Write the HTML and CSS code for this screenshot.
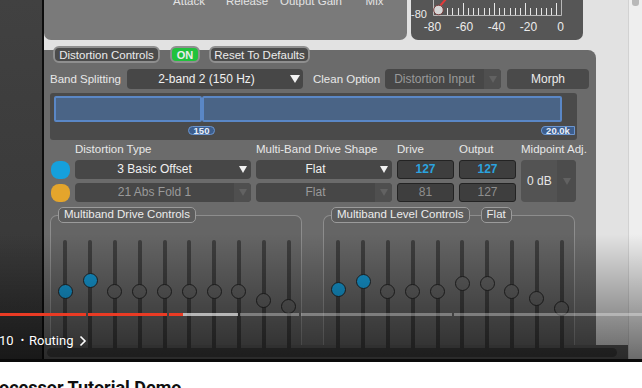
FILE: index.html
```html
<!DOCTYPE html>
<html>
<head>
<meta charset="utf-8">
<link rel="stylesheet" href="styles.css">
</head>
<body>
<div class="video">
  <div class="dock"></div>
  <div class="app">
    <div class="main">
      <div class="top-row">
        <div class="comp-panel">
          <span>Attack</span><span>Release</span><span>Output Gain</span><span>Mix</span>
        </div>
        <div class="meter-panel">
          <div class="meter-top">
            <span class="meter-min">-80</span>
            <svg class="meter-scale" width="130" height="16" viewBox="0 0 130 16">
              <path d="M0.5 0V15.5H128.5V0" fill="none" stroke="#b9b9b9" stroke-width="1"/>
              <path d="M14.5 15V8M19.5 15V8M25.5 15V8M30.5 15V3M35.5 15V8M40.5 15V8M45.5 15V8M51.5 15V8M56.5 15V8M61.5 15V3M66.5 15V8M71.5 15V8M77.5 15V8M82.5 15V8M87.5 15V8M92.5 15V3M97.5 15V8M103.5 15V8M108.5 15V8M113.5 15V8M118.5 15V8M123.5 15V3" stroke="#e6e6e6" stroke-width="1"/>
              <path d="M7 6L13 -1" stroke="#e03a3a" stroke-width="2"/>
              <circle cx="5.5" cy="10" r="4.8" fill="#d6d6d6" stroke="#7a3b3b" stroke-width="1"/>
            </svg>
          </div>
          <div class="meter-labels"><span>-80</span><span>-60</span><span>-40</span><span>-20</span><span>0</span></div>
        </div>
      </div>

      <div class="dist-panel">
        <div class="tabs">
          <span class="tab t-dist">Distortion Controls</span>
          <span class="tab t-on">ON</span>
          <span class="tab t-reset">Reset To Defaults</span>
        </div>

        <div class="band-row">
          <span class="lbl lbl-band">Band Splitting</span>
          <div class="dd w-band"><span class="dd-text">2-band 2 (150 Hz)</span><span class="dd-arrow big"></span></div>
          <span class="lbl lbl-clean">Clean Option</span>
          <div class="dd w-clean disabled"><span class="dd-text">Distortion Input</span><span class="dd-arrow"></span></div>
          <div class="morph">Morph</div>
        </div>

        <div class="band-view">
          <div class="bands"><div class="band b1"></div><div class="band b2"></div></div>
          <div class="marks"><span class="mark m150">150</span><span class="mark m20k">20.0k</span></div>
        </div>

        <div class="dist-grid">
          <span></span>
          <span class="head">Distortion Type</span>
          <span class="head">Multi-Band Drive Shape</span>
          <span class="head">Drive</span>
          <span class="head">Output</span>
          <span class="head">Midpoint Adj.</span>

          <span class="sw sw-blue"></span>
          <div class="dd"><span class="dd-text">3 Basic Offset</span><span class="dd-arrow"></span></div>
          <div class="dd"><span class="dd-text">Flat</span><span class="dd-arrow"></span></div>
          <span class="num active">127</span>
          <span class="num active">127</span>
          <div class="midpoint"><span class="mid-text">0 dB</span><span class="dd-arrow"></span></div>

          <span class="sw sw-yellow"></span>
          <div class="dd disabled"><span class="dd-text">21 Abs Fold 1</span><span class="dd-arrow"></span></div>
          <div class="dd disabled"><span class="dd-text">Flat</span><span class="dd-arrow"></span></div>
          <span class="num">81</span>
          <span class="num">127</span>
        </div>

        <div class="groups">
          <div class="group">
            <div class="group-head"><span class="pill">Multiband Drive Controls</span></div>
            <div class="sliders">
              <div class="slider"><span class="knob on" style="top:43.5px"></span></div>
              <div class="slider"><span class="knob on" style="top:33px"></span></div>
              <div class="slider"><span class="knob" style="top:43.5px"></span></div>
              <div class="slider"><span class="knob" style="top:43.5px"></span></div>
              <div class="slider"><span class="knob" style="top:43.5px"></span></div>
              <div class="slider"><span class="knob" style="top:43.5px"></span></div>
              <div class="slider"><span class="knob" style="top:43.5px"></span></div>
              <div class="slider"><span class="knob" style="top:43.5px"></span></div>
              <div class="slider"><span class="knob" style="top:52.5px"></span></div>
              <div class="slider"><span class="knob" style="top:59px"></span></div>
            </div>
          </div>
          <div class="group">
            <div class="group-head"><span class="pill">Multiband Level Controls</span><span class="pill">Flat</span></div>
            <div class="sliders">
              <div class="slider"><span class="knob on" style="top:42px"></span></div>
              <div class="slider"><span class="knob on" style="top:34px"></span></div>
              <div class="slider"><span class="knob" style="top:43.5px"></span></div>
              <div class="slider"><span class="knob" style="top:43.5px"></span></div>
              <div class="slider"><span class="knob" style="top:43.5px"></span></div>
              <div class="slider"><span class="knob" style="top:36px"></span></div>
              <div class="slider"><span class="knob" style="top:36px"></span></div>
              <div class="slider"><span class="knob" style="top:43.5px"></span></div>
              <div class="slider"><span class="knob" style="top:50.5px"></span></div>
              <div class="slider"><span class="knob" style="top:61px"></span></div>
            </div>
          </div>
        </div>
      </div>

      <div class="hscroll"><div class="hthumb"></div></div>
    </div>
    <div class="vscroll"><div class="vthumb"></div></div>
  </div>

  <div class="shade"></div>
  <div class="progress">
    <span class="seg played" style="width:86px"></span>
    <span class="seg played" style="width:79px"></span>
    <span class="seg partial" style="width:69px"></span>
    <span class="seg" style="width:59px"></span>
    <span class="seg" style="width:151px"></span>
    <span class="seg rest"></span>
  </div>
  <div class="chapter">
    <span>10</span><span class="dot">•</span><span>Routing</span>
    <svg class="chev" width="8" height="12" viewBox="0 0 8 12"><path d="M1.5 1.5L6 6L1.5 10.5" fill="none" stroke="#fff" stroke-width="1.6"/></svg>
  </div>
</div>
<div class="title">ocessor Tutorial Demo</div>
</body>
</html>
```

FILE: styles.css
```css
* { box-sizing: border-box; margin: 0; padding: 0; }
html, body { width: 642px; height: 388px; overflow: hidden; }
body { background: #fff; font-family: "Liberation Sans", Arial, sans-serif; color: #ececec; }

.video {
  position: relative;
  display: flex;
  height: 362px;
  border-bottom: 3px solid #0a0a0a;
  background: #e2e2e2;
  overflow: hidden;
}
.dock { flex: none; width: 44px; background: linear-gradient(#414141, #363636); border-right: 2px solid #0d0d0d; }
.app { flex: 1; display: flex; min-width: 0; }
.main { flex: 1; min-width: 0; display: flex; flex-direction: column; }
.vscroll { flex: none; width: 14px; background: #eeeeee; border-left: 1px solid #d2d2d2; padding: 0 3px; }
.vthumb { height: 6px; border-radius: 0 0 3px 3px; background: #b8b8b8; }

/* top compressor / meter */
.top-row { flex: none; display: flex; height: 40px; gap: 4px; }
.comp-panel {
  width: 363px;
  background: #7a7a7a;
  border-radius: 0 0 7px 7px;
  display: grid;
  grid-template-columns: 58px 58px 70px 57px;
  align-items: start;
  padding-left: 116px;
  font-size: 11.5px;
  line-height: 12px;
}
.comp-panel span { text-align: center; margin-top: -5px; color: #e4e4e4; white-space: nowrap; }
.meter-panel { width: 172px; background: #565656; border-radius: 0 0 7px 7px; }
.meter-top { display: flex; height: 21px; }
.meter-min { width: 22px; padding-top: 9px; font-size: 11px; line-height: 11px; }
.meter-scale { display: block; }
.meter-labels { display: flex; padding-left: 5.5px; font-size: 12px; line-height: 12px; }
.meter-labels span { width: 32px; text-align: center; }

/* distortion panel */
.dist-panel {
  flex: 1;
  min-height: 0;
  margin-top: 10px;
  width: 552px;
  background: #6b6b6b;
  border-radius: 0 8px 0 0;
  padding-left: 6px;
}
.tabs { display: flex; margin-top: -4px; padding-left: 3px; height: 17px; }
.tab {
  display: flex; align-items: center; justify-content: center;
  height: 17px;
  border: 2px solid #8f8f8f;
  border-radius: 6px;
  background: #4b4b4b;
  font-size: 11.5px;
  white-space: nowrap;
}
.t-dist { width: 107px; }
.t-on { width: 30px; margin-left: 10px; background: #20c23c; font-weight: bold; font-size: 11px; }
.t-reset { width: 101px; margin-left: 9px; }

.band-row { display: flex; align-items: center; height: 20px; margin-top: 6px; }
.lbl { font-size: 11.5px; white-space: nowrap; color: #e8e8e8; }
.lbl-band { width: 77px; }
.lbl-clean { width: 72px; margin-left: 10px; }
.w-band { width: 176px; }
.w-clean { width: 116px; }
.morph {
  width: 82px; height: 20px; margin-left: 6px;
  background: #4a4a4a; border-radius: 4px;
  font-size: 12px; line-height: 20px; text-align: center;
}

.dd { display: flex; height: 19px; background: #474747; border-radius: 4px; overflow: hidden; }
.w-band, .w-clean { height: 20px; }
.dd-text { flex: 1; text-align: center; font-size: 12px; line-height: 19px; white-space: nowrap; color: #f0f0f0; }
.w-band .dd-text, .w-clean .dd-text { line-height: 20px; }
.dd-arrow { flex: none; width: 17px; display: flex; align-items: center; justify-content: center; }
.dd-arrow::after {
  content: "";
  border-left: 4.5px solid transparent;
  border-right: 4.5px solid transparent;
  border-top: 7px solid #f2f2f2;
}
.dd-arrow.big::after { border-left-width: 5px; border-right-width: 5px; border-top-width: 8px; }
.dd.disabled .dd-text { color: #9a9a9a; }
.dd.disabled .dd-arrow { background: #4f4f4f; }
.dd.disabled .dd-arrow::after { border-top-color: #626262; }

.band-view {
  margin-top: 4px;
  width: 527px; height: 47px;
  background: #4a4a4a;
  border-radius: 3px;
  padding: 3px 2px 0 4px;
}
.bands { display: flex; width: 508px; height: 26px; }
.band { border: 2px solid #5a87c6; background: #4a6486; border-radius: 2px; }
.b1 { width: 148px; }
.b2 { flex: 1; }
.marks { display: flex; margin-top: 4px; height: 9px; }
.mark {
  font-size: 9.5px; line-height: 7px; font-weight: bold;
  background: #3c5e8e; border: 1px solid #6b95cf; color: #e8eef8;
  border-radius: 5px; text-align: center;
}
.m150 { margin-left: 134px; width: 27px; }
.m20k { margin-left: auto; width: 34px; border-radius: 5px 1px 1px 5px; }

.dist-grid {
  display: grid;
  grid-template-columns: 19px 176px 136px 57px 57px 55px;
  grid-template-rows: 15px 19px 19px;
  column-gap: 5px;
  row-gap: 4px;
  margin: 1px 0 0 1px;
}
.head { align-self: end; font-size: 11.5px; line-height: 13px; white-space: nowrap; color: #e8e8e8; }
.sw { border-radius: 8px; height: 18px; align-self: center; }
.sw-blue { background: #15a0dc; }
.sw-yellow { background: #e4a52c; }
.num {
  background: #3e3e3e; border: 1px solid #232323; border-radius: 3px;
  font-size: 12px; line-height: 17px; text-align: center; color: #8e8e8e;
}
.num.active { color: #2ba3df; font-weight: bold; }
.midpoint { grid-column: 6; grid-row: 2 / 4; display: flex; background: #535353; border-radius: 4px; overflow: hidden; }
.mid-text { flex: 1; padding-left: 6px; font-size: 12px; line-height: 42px; color: #e6e6e6; }
.midpoint .dd-arrow { width: 19px; background: #4c4c4c; }
.midpoint .dd-arrow::after { border-top-color: #616161; }

.groups { display: flex; gap: 21px; margin-top: 5px; }
.group {
  width: 252px; height: 130px;
  margin-top: 8px;
  border: 1px solid #8d8d8d;
  border-bottom: none;
  border-radius: 7px 7px 0 0;
  background: #656565;
}
.group-head { display: flex; gap: 11px; margin-top: -9px; padding-left: 7px; height: 16px; }
.pill {
  height: 16px; padding: 0 5px;
  border: 1.5px solid #9b9b9b; border-radius: 5px;
  background: #5d5d5d;
  font-size: 11.5px; line-height: 13px; white-space: nowrap; color: #ececec;
}
.sliders { display: grid; grid-template-columns: repeat(10, 24.8px); padding-left: 2px; margin-top: 17px; height: 110px; }
.slider { position: relative; }
.slider::before {
  content: ""; position: absolute; left: 50%; top: 0; bottom: 0;
  width: 4px; margin-left: -2px; background: #3e3e3e; border-radius: 2px;
}
.knob {
  position: absolute; left: 50%; margin-left: -7.5px;
  width: 15px; height: 15px; border-radius: 50%;
  border: 1.5px solid #232323; background: #606060;
}
.knob.on { background: #1597d1; }

.hscroll { flex: none; height: 14px; background: #5e5e5e; padding: 3px 11px 2px 3px; }
.hthumb { height: 9px; border-radius: 5px; background: #404040; }

/* youtube overlay */
.shade {
  position: absolute; left: 0; right: 0; bottom: 0; height: 125px;
  background: linear-gradient(rgba(0,0,0,0), rgba(0,0,0,0.55));
  pointer-events: none;
}
.progress { position: absolute; left: 0; right: 0; top: 313px; height: 3px; display: flex; gap: 2px; }
.seg { flex: none; height: 3px; background: rgba(255,255,255,0.32); }
.seg.played { background: #ea3b24; }
.seg.partial { background: linear-gradient(to right, #ea3b24 14px, rgba(255,255,255,0.62) 14px); }
.seg.rest { flex: 1; }
.chapter {
  position: absolute; left: -1px; top: 333px;
  display: flex; align-items: center; gap: 0;
  font-family: Roboto, "Liberation Sans", sans-serif; font-size: 13px; line-height: 16px; color: #fff;
  text-shadow: 0 0 2px rgba(0,0,0,0.5);
}
.chapter .dot { margin: 0 5px 0 7px; font-size: 10px; }
.chev { margin-left: 6px; }

.title {
  margin: 14px 0 0 -1px;
  font-family: Roboto, "Liberation Sans", sans-serif;
  font-weight: bold; font-size: 18px; line-height: 24px;
  color: #0f0f0f; white-space: nowrap;
}
```
